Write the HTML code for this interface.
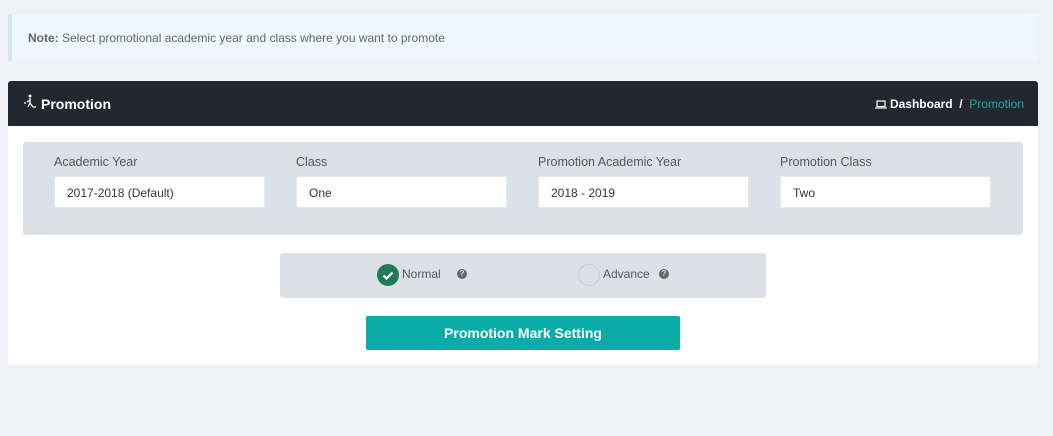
<!DOCTYPE html>
<html><head><style>
*{box-sizing:border-box;margin:0;padding:0}
body{width:1053px;height:436px;background:#f0f1f5;font-family:"Liberation Sans",sans-serif;font-size:12px;color:#555;position:relative;overflow:hidden}
.note{position:absolute;left:8px;top:14px;width:1030px;height:47px;background:#eef6fe;border-left:4px solid #d3e6f3;padding:17px 0 0 16px;color:#666}
.card{position:absolute;left:8px;top:81px;width:1030px;height:284px;background:#fff;border-radius:3px}
.hd{height:45px;background:#23272e;border-radius:3px 3px 0 0;color:#fff;position:relative}
.hd .t{position:absolute;left:33px;top:15px;font-size:14px;font-weight:bold}
.hd .ic{position:absolute;left:15px;top:13px}
.bc{position:absolute;right:14px;top:16px;font-size:12px;font-weight:bold}
.bc span{color:#1ba8a8;font-weight:normal}
.filt{position:absolute;left:15px;top:61px;width:1000px;height:93px;background:#dce1e8;border-radius:3px}
.f{position:absolute;top:13px}
.f label{display:block;color:#555;font-size:12.5px;margin-bottom:7px}
.f div{width:211px;height:32px;background:#fff;border:1px solid #e4e6ea;padding:9px 12px;color:#333;font-size:12px}
.rad{position:absolute;left:272px;top:172px;width:486px;height:45px;background:#dce1e8;border-radius:3px}
.c{position:absolute;top:11px;width:22px;height:22px;border-radius:50%}
.q{position:absolute;top:16px;width:10px;height:10px;border-radius:50%;background:#666;color:#dce1e8;font-size:8px;font-weight:bold;text-align:center;line-height:10px}
.btn{position:absolute;left:358px;top:235px;width:314px;height:34px;background:#0aaca8;border-radius:2px;color:#fff;font-weight:bold;font-size:14px;text-align:center;line-height:34px}
</style></head><body>
<div class="note"><b>Note:</b> Select promotional academic year and class where you want to promote</div>
<div class="card">
<div class="hd"><svg class="ic" width="14" height="16" viewBox="0 0 14 16" fill="none" stroke="#fff" stroke-width="1.3"><circle cx="7" cy="2" r="1.5" fill="#fff" stroke="none"/><path d="M7 4v5l-2 4M7 9l3 4h3M7 6l-3 2M1 9h2"/></svg><span class="t">Promotion</span>
<div class="bc"><svg width="12" height="9" viewBox="0 0 12 9" fill="none" stroke="#fff" stroke-width="1.2" style="vertical-align:-1px"><rect x="2" y="1" width="8" height="5.5"/><path d="M0 8h12"/></svg> Dashboard &nbsp;/&nbsp; <span>Promotion</span></div></div>
<div class="filt">
<div class="f" style="left:31px"><label>Academic Year</label><div>2017-2018 (Default)</div></div>
<div class="f" style="left:273px"><label>Class</label><div>One</div></div>
<div class="f" style="left:515px"><label>Promotion Academic Year</label><div>2018 - 2019</div></div>
<div class="f" style="left:757px"><label>Promotion Class</label><div>Two</div></div>
</div>
<div class="rad">
<div class="c" style="left:97px;background:#1f7a55"><svg width="22" height="22" viewBox="0 0 22 22" fill="none" stroke="#fff" stroke-width="2.2"><path d="M6.5 11.5l3 3 6-6"/></svg></div>
<span style="position:absolute;left:122px;top:14px">Normal</span>
<div class="q" style="left:177px">?</div>
<div class="c" style="left:298px;border:1px solid #cfc9c3"></div>
<span style="position:absolute;left:323px;top:14px">Advance</span>
<div class="q" style="left:379px">?</div>
</div>
<div class="btn">Promotion Mark Setting</div>
</div>
</body></html>
